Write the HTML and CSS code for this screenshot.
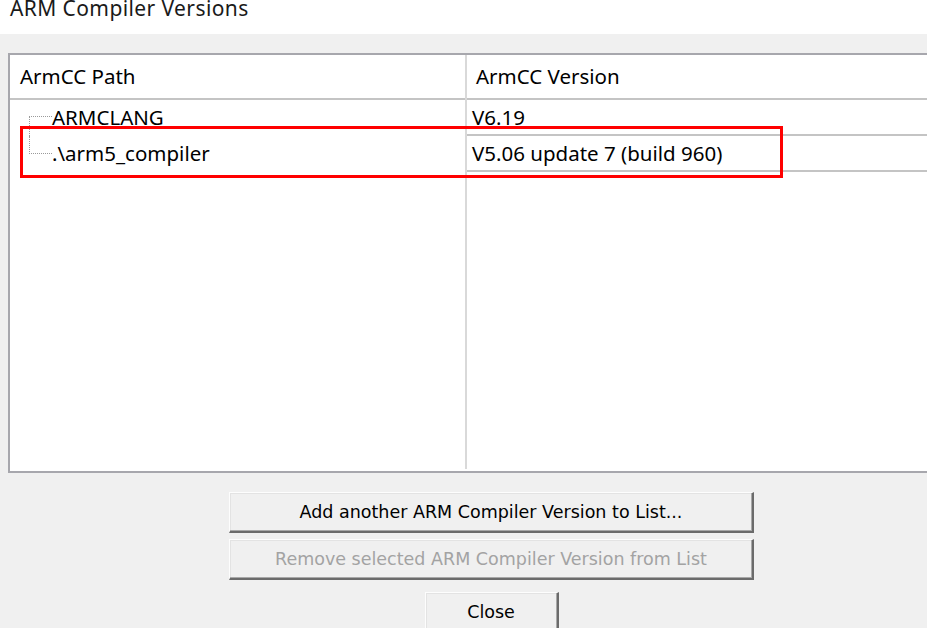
FILE: index.html
```html
<!DOCTYPE html>
<html>
<head>
<meta charset="utf-8">
<title>ARM Compiler Versions</title>
<link rel="stylesheet" href="styles.css">
</head>
<body>
<div class="titlebar"><span class="title">ARM Compiler Versions</span></div>
<div class="dialog">
  <div class="list">
    <div class="col col-path">
      <div class="head">ArmCC Path</div>
      <div class="row first"><span class="conn"><span class="half"></span><span class="half"></span></span><span class="txt">ARMCLANG</span></div>
      <div class="row last"><span class="conn"><span class="half"></span><span class="half"></span></span><span class="txt">.\arm5_compiler</span></div>
    </div>
    <div class="divider"></div>
    <div class="col col-ver">
      <div class="head">ArmCC Version</div>
      <div class="row">V6.19</div>
      <div class="row">V5.06 update 7 (build 960)</div>
    </div>
    <div class="highlight"></div>
  </div>
  <div class="buttons">
    <button class="btn wide">Add another ARM Compiler Version to List...</button>
    <button class="btn wide" disabled>Remove selected ARM Compiler Version from List</button>
    <button class="btn close">Close</button>
  </div>
</div>
</body>
</html>
```
FILE: styles.css
```css
html, body {
  margin: 0;
  padding: 0;
  background: #f0f0f0;
  overflow: hidden;
  width: 927px;
  height: 628px;
}
body {
  font-family: "Noto Sans", "Open Sans", sans-serif;
  color: #000;
}
.titlebar {
  background: #fff;
  height: 34px;
  overflow: hidden;
}
.title {
  display: block;
  font-size: 21px;
  line-height: 21px;
  margin-top: -2px;
  padding-left: 10px;
  color: #1a1a1a;
  letter-spacing: 0.4px;
}
.dialog {
  padding: 19px 0 0 8px;
}
.list {
  position: relative;
  display: flex;
  width: 960px;
  height: 416px;
  background: #fff;
  border: 2px solid #a7a7ad;
  border-right: none;
  font-size: 20.5px;
}
.col {
  display: flex;
  flex-direction: column;
}
.col-path {
  width: 455px;
}
.divider {
  width: 2px;
  background: #d9d9d9;
  margin-bottom: 2px;
}
.col-ver {
  flex: 1;
}
.head {
  height: 43px;
  line-height: 43px;
  border-bottom: 2px solid #c4c4c4;
  padding-left: 10px;
  white-space: nowrap;
}
.col-ver .head {
  padding-left: 9px;
}
.row {
  height: 36px;
  line-height: 34px;
  display: flex;
  white-space: nowrap;
}
.col-ver .row {
  height: 34px;
  border-bottom: 2px solid #c4c4c4;
  padding-left: 5px;
  display: block;
}
.col-path .row {
  padding-left: 19px;
}
.conn {
  display: flex;
  flex-direction: column;
  width: 23px;
  flex: none;
}
.half {
  flex: 1;
}
.row.first .half:last-child {
  border-top: 1px dotted #9a9a9a;
  border-left: 1px dotted #9a9a9a;
}
.row.last .half:first-child {
  border-bottom: 1px dotted #9a9a9a;
  border-left: 1px dotted #9a9a9a;
}
.row.first .half:first-child {
  flex: 0 0 16px;
}
.row.last .half:first-child {
  flex: 0 0 17px;
}
.highlight {
  position: absolute;
  left: 10px;
  top: 71px;
  width: 757px;
  height: 46px;
  border: 3px solid #ff0000;
  pointer-events: none;
}
.buttons {
  width: 525px;
  margin: 19px 0 0 221px;
  display: flex;
  flex-direction: column;
  align-items: center;
}
.btn {
  font-family: "DejaVu Sans", Verdana, sans-serif;
  font-size: 17.5px;
  background: #f0f0f0;
  color: #000;
  border-style: solid;
  border-width: 1px 2px 2px 1px;
  border-color: #fdfdfd #6b6b6b #6b6b6b #fdfdfd;
  box-shadow: inset -1px -1px 0 #a8a8a8, inset 1px 1px 0 #e3e3e3;
  padding: 0;
  height: 41px;
}
.btn.wide {
  width: 525px;
  margin-bottom: 6px;
}
.btn.wide + .btn.wide {
  margin-bottom: 12px;
}
.btn:disabled {
  color: #a3a3a3;
}
.btn.close {
  width: 134px;
}
```
